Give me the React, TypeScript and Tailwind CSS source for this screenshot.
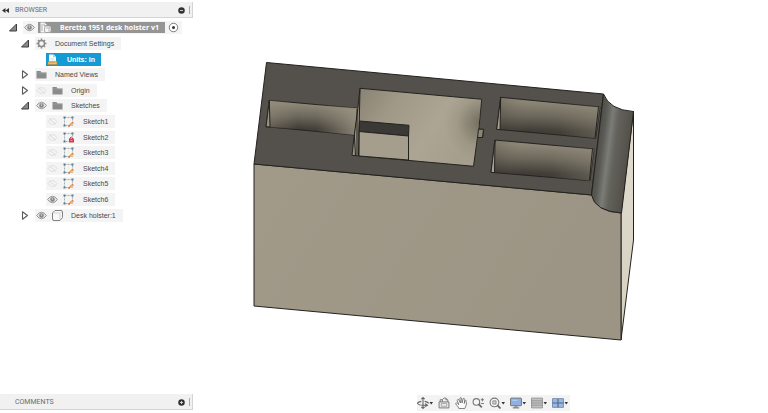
import { useState } from "react";
import type { ReactNode } from "react";

type IconName = "component" | "gear" | "units" | "folder" | "sketch" | "locked" | "body";

type Node = {
  id: string;
  label: string;
  level: 0 | 1 | 2;
  icon: IconName;
  caret?: "open" | "closed";
  eye?: "on" | "off";
};

const nodes: Node[] = [
  { id: "root", label: "Beretta 1951 desk holster v1", level: 0, icon: "component", caret: "open", eye: "on" },
  { id: "settings", label: "Document Settings", level: 1, icon: "gear", caret: "open" },
  { id: "units", label: "Units: in", level: 2, icon: "units" },
  { id: "views", label: "Named Views", level: 1, icon: "folder", caret: "closed" },
  { id: "origin", label: "Origin", level: 1, icon: "folder", caret: "closed", eye: "off" },
  { id: "sketches", label: "Sketches", level: 1, icon: "folder", caret: "open", eye: "on" },
  { id: "s1", label: "Sketch1", level: 2, icon: "sketch", eye: "off" },
  { id: "s2", label: "Sketch2", level: 2, icon: "locked", eye: "off" },
  { id: "s3", label: "Sketch3", level: 2, icon: "sketch", eye: "off" },
  { id: "s4", label: "Sketch4", level: 2, icon: "sketch", eye: "off" },
  { id: "s5", label: "Sketch5", level: 2, icon: "sketch", eye: "off" },
  { id: "s6", label: "Sketch6", level: 2, icon: "sketch", eye: "on" },
  { id: "body", label: "Desk holster:1", level: 1, icon: "body", caret: "closed", eye: "on" },
];

const indent = ["pl-[9px]", "pl-[21px]", "pl-[32px]"];

const Svg = ({ children, className = "size-[11px]" }: { children: ReactNode; className?: string }) => (
  <svg viewBox="0 0 22 22" fill="none" className={`${className} shrink-0`} aria-hidden="true">
    {children}
  </svg>
);

const Caret = ({ open }: { open: boolean }) => (
  <svg viewBox="0 0 18 18" fill="none" className="size-[9px]" aria-hidden="true">
    {open ? (
      <path d="M15 2v14H1z" fill="#8a8a8a" stroke="#3c3c3c" strokeWidth="2" strokeLinejoin="round" />
    ) : (
      <path d="M3 1.500 13 9 3 16.500z" fill="#fff" stroke="#5c5c5c" strokeWidth="2.200" strokeLinejoin="round" />
    )}
  </svg>
);

const Eye = ({ on }: { on: boolean }) =>
  on ? (
    <Svg>
      <path d="M1 11q10-13 20 0-10 13-20 0z" fill="#e4e4e4" stroke="#999" strokeWidth="2" />
      <circle cx="11" cy="11" r="4.500" fill="#858585" />
      <circle cx="11" cy="10" r="1.500" fill="#ddd" />
    </Svg>
  ) : (
    <Svg>
      <path d="M2 11q9-12 18 0-9 12-18 0z" stroke="#dedede" strokeWidth="2" />
      <path d="M4 5l14 12" stroke="#dedede" strokeWidth="2" />
    </Svg>
  );

const NodeIcon = ({ name }: { name: IconName }) => {
  switch (name) {
    case "component":
      return (
        <Svg>
          <path d="M1 1h8l4 4v16H1z" fill="#f6f6f6" />
          <path d="M4 4v14M8 3v4h4" stroke="#999" strokeWidth="1.500" />
          <rect x="9" y="8" width="13" height="13" rx="3" fill="#f6f6f6" stroke="#959595" strokeWidth="1.500" />
          <path d="M11 12h7v8M18 12l3-3" stroke="#a5a5a5" strokeWidth="1.500" />
        </Svg>
      );
    case "gear":
      return (
        <Svg>
          <path
            d="M11 1v4M11 17v4M1 11h4M17 11h4M4 4l3 3M15 15l3 3M4 18l3-3M15 7l3-3"
            stroke="#8b8b8b"
            strokeWidth="3"
          />
          <circle cx="11" cy="11" r="6" fill="#f4f4f4" stroke="#8b8b8b" strokeWidth="3" />
        </Svg>
      );
    case "units":
      return (
        <Svg>
          <path d="M4 1h9l5 5v11H4z" fill="#fff" />
          <path d="M13 1v5h5" fill="#c5dbe6" stroke="#7fb3cc" />
          <path d="M7 9h7M7 12h8" stroke="#c8d6dc" strokeWidth="1.500" />
          <rect x="2" y="15" width="18" height="6" fill="#f3bf5b" stroke="#b98430" />
          <path d="M6 16v2M10 16v2M14 16v2" stroke="#8b6224" />
        </Svg>
      );
    case "folder":
      return (
        <Svg>
          <path d="M1 4h8l2 3h10v12H1z" fill="#8b8b8b" />
          <path d="M1 8h20" stroke="#aaa" />
        </Svg>
      );
    case "body":
      return (
        <Svg>
          <path
            d="M6 1h12q3 0 3 3v11l-5 6H4q-3 0-3-3V6z"
            fill="#f8f8f8"
            stroke="#808080"
            strokeWidth="2"
            strokeLinejoin="round"
          />
          <path d="M3 6h11q2 0 2 3v10M16 7l4-4" stroke="#c4c4c4" strokeWidth="1.500" />
        </Svg>
      );
    default:
      return (
        <Svg>
          <path d="M3 3h16v16H3z" stroke="#8a969b" strokeWidth="1.500" strokeDasharray="4 2" />
          <path d="M1 1h4v4H1zM17 1h4v4h-4zM1 17h4v4H1z" fill="#5b7b88" />
          {name === "sketch" ? (
            <>
              <path d="M11 21l2-5 6-5 3 3-6 5z" fill="#f3a94e" />
              <path d="M11 21l1-3 2 2zM18 12l3 3" fill="#c9573f" stroke="#d9704a" strokeWidth="1.500" />
            </>
          ) : (
            <>
              <path d="M14 14v-2q2.500-4 5 0v2" stroke="#cf4456" strokeWidth="2" />
              <rect x="12" y="13" width="10" height="8" rx="1" fill="#d5394c" />
              <path d="M15 17h4" stroke="#f3c0c6" strokeWidth="1.500" />
            </>
          )}
        </Svg>
      );
  }
};

const PanelBar = ({ title, children, collapse }: { title: string; children: ReactNode; collapse?: boolean }) => (
  <div className="flex h-4 items-center border-b border-r border-[#d4d4d4] bg-[#f1f1f1] pt-px">
    <div className="flex w-[15px] pl-[2px]">
      {collapse && (
        <button aria-label="Collapse browser">
          <svg viewBox="0 0 14 10" className="h-[5px] w-[7px]" fill="#333">
            <path d="M7 0v10L0 5zM14 0v10L7 5z" />
          </svg>
        </button>
      )}
    </div>
    <h2 className="flex-1 font-[Roboto,sans-serif] text-[7px] leading-[8px] text-[#6c6c6c]">{title}</h2>
    {children}
    <span className="ml-1 mr-[2px] h-2 w-px bg-[#aaa]" />
  </div>
);

const Dot = ({ plus }: { plus?: boolean }) => (
  <svg viewBox="0 0 14 14" className="size-[7px]" aria-hidden="true">
    <circle cx="7" cy="7" r="6.500" fill="#333" />
    <path d={plus ? "M4 7h6M7 4v6" : "M4 7h6"} stroke="#ddd" strokeWidth="1.800" />
  </svg>
);

const TreeRow = ({ node, selected, onSelect }: { node: Node; selected: boolean; onSelect: () => void }) => {
  const root = node.level === 0;
  return (
    <li className={`flex items-center ${indent[node.level]}`}>
      <div className="flex w-[14px]">
        {node.caret && (
          <button aria-label={`Toggle ${node.label}`}>
            <Caret open={node.caret === "open"} />
          </button>
        )}
      </div>
      <div className={`flex h-[13px] items-center pl-px ${selected ? "bg-[#159bd3]" : "bg-[#f4f4f4]"}`}>
        {node.eye && (
          <button aria-label={`Visibility of ${node.label}`} className={root ? "mr-[3px]" : "mr-[5px]"}>
            <Eye on={node.eye === "on"} />
          </button>
        )}
        <button
          onClick={onSelect}
          className={`flex items-center whitespace-nowrap text-[7px] leading-none ${
            node.level === 1 ? "gap-2" : "gap-[9px]"
          } ${
            root
              ? "h-[11px] bg-[#959595] pl-[2px] pr-[6px] font-['Noto_Sans',sans-serif] font-bold text-white"
              : selected
                ? "pr-[6px] font-bold text-white"
                : "pr-[7px] text-[#484848]"
          }`}
        >
          <NodeIcon name={node.icon} />
          {node.label}
        </button>
        {root && (
          <label className="mx-[3px] flex">
            <input type="radio" defaultChecked className="peer sr-only" aria-label="Activate component" />
            <Svg>
              <circle cx="11" cy="11" r="8.500" fill="#fff" stroke="#555" strokeWidth="1.500" />
              <circle cx="11" cy="11" r="3" fill="#333" />
            </Svg>
          </label>
        )}
      </div>
    </li>
  );
};

const tools: { label: string; menu?: boolean; icon: ReactNode }[] = [
  {
    label: "Orbit",
    menu: true,
    icon: (
      <>
        <path d="M11 1v20M8 4l3-3 3 3M8 18l3 3 3-3" stroke="#666" strokeWidth="2" />
        <path d="M8 8q-7 1-7 4 3 4 15 3M14 8q7 1 7 4" stroke="#666" strokeWidth="2" />
        <path d="M15 11l6 4-6 4z" fill="#666" />
      </>
    ),
  },
  {
    label: "Look At",
    icon: (
      <>
        <path d="M2 9h18v11H2z" fill="#eee" stroke="#777" strokeWidth="1.800" />
        <path d="M4 9V5h4v4M8 5l3-3h4v3M14 5h4v4" stroke="#777" strokeWidth="1.800" />
        <path d="M6 12h10v5H6z" stroke="#999" strokeWidth="1.500" />
      </>
    ),
  },
  {
    label: "Pan",
    icon: (
      <path
        d="M7 21q-1-3-3-5l-3-4q1-2 3-1l3 3-3-8q1-3 3-1l3 6-1-9q2-2 3 0l1 9 2-8q2-1 3 1l-1 8 2-5q2-1 3 1l-2 8q-1 3-2 5z"
        fill="#fff"
        stroke="#666"
        strokeWidth="1.500"
        strokeLinejoin="round"
      />
    ),
  },
  {
    label: "Zoom",
    icon: (
      <>
        <circle cx="8" cy="9" r="6" fill="#f5f5f5" stroke="#777" strokeWidth="2" />
        <path d="M12 13l6 6" stroke="#666" strokeWidth="3" />
        <path d="M16 5h6M19 2v6M16 12h6" stroke="#666" strokeWidth="1.500" />
      </>
    ),
  },
  {
    label: "Fit",
    menu: true,
    icon: (
      <>
        <circle cx="10" cy="10" r="8" fill="#f5f5f5" stroke="#777" strokeWidth="2" />
        <path d="M7 7h6v6H7z" fill="#ccc" stroke="#888" strokeWidth="1.500" />
        <path d="M15 15l6 6" stroke="#666" strokeWidth="3" />
      </>
    ),
  },
  {
    label: "Display Settings",
    menu: true,
    icon: (
      <>
        <rect x="1" y="2" width="20" height="14" rx="1" fill="#8fb0e0" stroke="#777" strokeWidth="1.800" />
        <path d="M8 17h6v2h3v2H5v-2h3z" fill="#888" />
        <path d="M4 6h9" stroke="#b7cff2" strokeWidth="2" />
      </>
    ),
  },
  {
    label: "Grid and Snaps",
    menu: true,
    icon: (
      <>
        <path d="M1 2h20v18H1z" fill="#c4c4c4" stroke="#8a8a8a" strokeWidth="1.500" />
        <path d="M1 7h20M1 11h20M1 15h20" stroke="#8a8a8a" strokeWidth="1.500" />
        <path d="M6 2v18M11 2v18M16 2v18" stroke="#b4b4b4" />
      </>
    ),
  },
  {
    label: "Viewports",
    menu: true,
    icon: (
      <>
        <path d="M1 3h20v16H1z" fill="#9ab8e3" stroke="#6d80a0" strokeWidth="1.500" />
        <path d="M11 3v16M1 11h20" stroke="#4f678c" strokeWidth="2" />
      </>
    ),
  },
];

const Toolbar = () => (
  <nav aria-label="Navigation" className="mb-[2px] flex h-4 items-center gap-[5px] bg-[#f3f3f3] pr-[2px]">
    {tools.map((tool) => (
      <button key={tool.label} aria-label={tool.label} className="flex items-center">
        <Svg className="size-3">{tool.icon}</Svg>
        {tool.menu && (
          <svg viewBox="0 0 8 6" className="h-[3px] w-[4px]" fill="#333" aria-hidden="true">
            <path d="M1 0h7L4.500 5z" />
          </svg>
        )}
      </button>
    ))}
  </nav>
);

const Model = () => (
  <svg viewBox="193 0 575 395" className="min-h-0 w-full flex-1" role="img" aria-label="Desk holster">
    <defs>
      <linearGradient id="front" x1="0" y1="0" x2="1" y2="0.300">
        <stop offset="0" stopColor="#a19a89" />
        <stop offset="1" stopColor="#9c9585" />
      </linearGradient>
      <linearGradient id="side" x1="0" y1="0" x2="0" y2="1">
        <stop offset="0" stopColor="#e1dccf" />
        <stop offset="1" stopColor="#d6d0c0" />
      </linearGradient>
      <linearGradient id="fillet" gradientUnits="userSpaceOnUse" x1="597" y1="150" x2="629" y2="154">
        <stop offset="0" stopColor="#4f4e49" />
        <stop offset="0.150" stopColor="#5b5b56" />
        <stop offset="0.350" stopColor="#7b7c77" />
        <stop offset="0.550" stopColor="#62615b" />
        <stop offset="1" stopColor="#524f48" />
      </linearGradient>
      <linearGradient id="slot" x1="0.050" y1="0" x2="0" y2="1">
        <stop offset="0.100" stopColor="#8c8676" />
        <stop offset="0.450" stopColor="#6c675b" />
        <stop offset="0.800" stopColor="#403c36" />
        <stop offset="1" stopColor="#37342f" />
      </linearGradient>
      <linearGradient id="barrelSheen" x1="0" y1="0" x2="1" y2="0">
        <stop offset="0" stopColor="#999281" stopOpacity="0.450" />
        <stop offset="0.350" stopColor="#999281" stopOpacity="0" />
        <stop offset="0.550" stopColor="#999281" stopOpacity="0.050" />
        <stop offset="1" stopColor="#a09987" stopOpacity="0.800" />
      </linearGradient>
      <linearGradient id="magSheen" x1="0" y1="0" x2="1" y2="0">
        <stop offset="0" stopColor="#35322d" stopOpacity="0.250" />
        <stop offset="0.300" stopColor="#6c675b" stopOpacity="0" />
        <stop offset="0.600" stopColor="#999281" stopOpacity="0.050" />
        <stop offset="1" stopColor="#999281" stopOpacity="0.400" />
      </linearGradient>
      <linearGradient id="well" x1="0" y1="0" x2="1" y2="0.400">
        <stop offset="0" stopColor="#857f70" />
        <stop offset="0.350" stopColor="#a09987" />
        <stop offset="0.700" stopColor="#aca593" />
        <stop offset="1" stopColor="#a69f8d" />
      </linearGradient>
      <radialGradient id="shade" gradientUnits="userSpaceOnUse" cx="482" cy="123" r="38">
        <stop offset="0" stopColor="#5f5a4e" stopOpacity="0.750" />
        <stop offset="0.300" stopColor="#5f5a4e" stopOpacity="0.450" />
        <stop offset="0.650" stopColor="#5f5a4e" stopOpacity="0.120" />
        <stop offset="1" stopColor="#5f5a4e" stopOpacity="0" />
      </radialGradient>
    </defs>
    <g stroke="#24221f" strokeWidth="1" strokeLinejoin="round">
      <path d="M633.500 111.500V240L621 340V212.500z" fill="url(#side)" />
      <path d="M254 164l338 31q4 17 29 18v127L254 306z" fill="url(#front)" />
      <path d="M266.500 62.500L603.500 94 591.500 195 254 164z" fill="#54504b" />
      <path d="M603.500 94q6 16 30 17.500L621.500 213q-27-2-30-18z" fill="url(#fillet)" />

      {/* barrel slot */}
      <path d="M269.300 100.300L358 108.300 354.300 135 266 126.700z" fill="url(#slot)" />
      <path d="M269.300 100.300L358 108.300 354.300 135 266 126.700z" fill="url(#barrelSheen)" stroke="none" />
      <path d="M269.300 100.300L270 127 266 126.700z" fill="#989180" />

      {/* main well */}
      <path
        d="M360 88.300L481.700 99.300 478.800 129.200 483.500 129.700 482.700 137.500 477.500 137 473.500 166.300 352 155.300 354.300 135 357.800 108.300z"
        fill="url(#well)"
      />
      <path d="M360 88.300L481.700 99.300 477.500 137 473.500 166.300 400 159.500z" fill="url(#shade)" stroke="none" />
      <path d="M359.500 121L409 125.300 408.500 136 359 131.500z" fill="#3b3935" />
      <path d="M359 131.500L408.500 136V160L359 156z" fill="#a59e8c" />
      <path d="M360 88.300L358.500 155.700M354.300 135L355.500 155.500M357 109L357 155" fill="none" />
      <path d="M478.500 129.200h5l-1 8.300h-5z" fill="#8b8473" />

      {/* magazine slots */}
      <path d="M500.700 97.300L600 107 595.700 138.300 496.700 129.300z" fill="url(#slot)" />
      <path d="M500.700 97.300L600 107 595.700 138.300 496.700 129.300z" fill="url(#magSheen)" stroke="none" />
      <path d="M500.700 97.300L500 129.700 496.700 129.300z" fill="#aaa392" />
      <path d="M598.500 107L595 138" />
      <path d="M495 140L594 149 590 180.700 491 172.300z" fill="url(#slot)" />
      <path d="M495 140L594 149 590 180.700 491 172.300z" fill="url(#magSheen)" stroke="none" />
      <path d="M495 140L494.500 172.700 491 172.300z" fill="#aaa392" />
      <path d="M592.500 149L589.500 180" />
    </g>
  </svg>
);

const App = () => {
  const [selected, setSelected] = useState("units");

  return (
    <div className="flex h-screen bg-white font-['Liberation_Sans',Arial,sans-serif]">
      <aside className="flex w-[193px] shrink-0 flex-col justify-between pb-[3px] pt-[2px]">
        <div>
          <PanelBar title="BROWSER" collapse>
            <button aria-label="Browser options">
              <Dot />
            </button>
          </PanelBar>
          <ul className="mt-[2px] grid h-[203px] grid-rows-[repeat(13,1fr)]">
            {nodes.map((node) => (
              <TreeRow
                key={node.id}
                node={node}
                selected={selected === node.id}
                onSelect={() => setSelected(node.id)}
              />
            ))}
          </ul>
        </div>
        <PanelBar title="COMMENTS">
          <button aria-label="Add comment">
            <Dot plus />
          </button>
        </PanelBar>
      </aside>
      <main className="flex min-w-0 flex-1 flex-col items-center">
        <Model />
        <div className="flex pl-[26px]">
          <Toolbar />
        </div>
      </main>
    </div>
  );
};

export default App;
